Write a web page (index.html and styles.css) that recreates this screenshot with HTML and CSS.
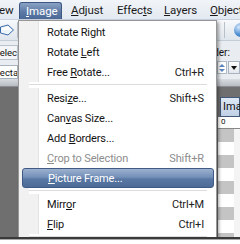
FILE: index.html
```html
<!DOCTYPE html>
<html>
<head>
<meta charset="utf-8">
<link rel="stylesheet" href="styles.css">
</head>
<body>
<div class="shot">
  <div class="menubar">
    <span class="mb mb-view">ew</span>
    <span class="mb mb-image"><u>I</u>mage</span>
    <span class="mb mb-adjust"><u>A</u>djust</span>
    <span class="mb mb-effects">Effec<u>t</u>s</span>
    <span class="mb mb-layers"><u>L</u>ayers</span>
    <span class="mb mb-objects"><u>O</u>bjects</span>
  </div>
  <div class="app">
    <div class="lcol">
      <div class="tbar">
        <svg class="selicon" width="14" height="12" viewBox="0 0 14 12">
          <path d="M0.5 3 L8 1 L13.5 6 L8 11 L0.5 9 Z" fill="#eef4fb" stroke="#3a6aa8" stroke-width="1"/>
          <path d="M2 4.2 L8 2.6 L11.5 6 L2 6 Z" fill="#ffffff"/>
        </svg>
        <span class="tsep"></span>
      </div>
      <div class="opts">
        <div class="lbl">Selection</div>
        <div class="combo">Rectangle</div>
      </div>
      <div class="strip"></div>
      <div class="canvas"></div>
    </div>
    <div class="mid"></div>
    <div class="rcol">
      <div class="tbar rt">
        <span class="tsep"></span>
        <span class="ball"></span>
      </div>
      <div class="opts ropts">
        <div class="rlbl">Order:</div>
        <div class="spin">
          <span class="arrows"><i class="up"></i><i class="dn"></i></span>
          <span class="drop"><i class="tri"></i></span>
        </div>
      </div>
      <div class="strip"></div>
      <div class="tabarea">
        <div class="tab">Image</div>
      </div>
      <div class="ruler">0</div>
      <div class="checks">
        <div class="ck g"></div><div class="ck"></div><div class="ck g"></div><div class="ck"></div>
        <div class="ck g"></div><div class="ck"></div><div class="ck g"></div><div class="ck"></div>
        <div class="ck g"></div>
      </div>
    </div>
  </div>

  <div class="menu">
    <div class="item"><span class="lab">Rotate Right</span><span class="key"></span></div>
    <div class="item"><span class="lab">Rotate <u>L</u>eft</span><span class="key"></span></div>
    <div class="item"><span class="lab">Free <u>R</u>otate...</span><span class="key">Ctrl+R</span></div>
    <div class="sep"></div>
    <div class="item"><span class="lab">Resi<u>z</u>e...</span><span class="key">Shift+S</span></div>
    <div class="item"><span class="lab">Can<u>v</u>as Size...</span><span class="key"></span></div>
    <div class="item"><span class="lab">Add <u>B</u>orders...</span><span class="key"></span></div>
    <div class="item dis"><span class="lab"><u>C</u>rop to Selection</span><span class="key">Shift+R</span></div>
    <div class="item hot"><span class="lab"><u>P</u>icture Frame...</span><span class="key"></span></div>
    <div class="sep"></div>
    <div class="item"><span class="lab">Mirr<u>o</u>r</span><span class="key">Ctrl+M</span></div>
    <div class="item"><span class="lab"><u>F</u>lip</span><span class="key">Ctrl+I</span></div>
    <div class="sep"></div>
    <div class="item"><span class="lab">Rotate 180</span><span class="key"></span></div>
  </div>
</div>
</body>
</html>
```
FILE: styles.css
```css
html, body {
  margin: 0;
  padding: 0;
  background: #ffffff;
}
body {
  width: 240px;
  height: 244px;
  overflow: hidden;
  font-family: Roboto, "Liberation Sans", sans-serif;
  font-size: 11px;
  color: #111;
}
u { text-decoration: underline; text-underline-offset: 1px; }

.shot {
  position: relative;
  height: 237px;
  overflow: hidden;
  border-bottom: 2px solid #3a3a3a;
  box-shadow: 0 1px 0 #a8a8a8;
  background: #6f6f6f;
}

/* menubar */
.menubar {
  height: 20px;
  display: flex;
  align-items: flex-end;
  background: linear-gradient(#f1f4f8, #e3e9f1);
  border-bottom: 1px solid #c9d2de;
  box-sizing: border-box;
  white-space: nowrap;
}
.mb {
  height: 17px;
  line-height: 16px;
  box-sizing: border-box;
  font-size: 11.5px;
  letter-spacing: -0.1px;
  color: #1a1a1a;
  flex: none;
}
.mb-view { width: 19px; text-indent: -1px; }
.mb-image {
  width: 43px;
  padding-left: 6px;
  color: #fff;
  background: linear-gradient(#8aa2c4, #5d7aa6 55%, #4c6a97);
  border: 1px solid #3c5784;
  border-bottom: none;
  border-radius: 3px 3px 0 0;
}
.mb-adjust { width: 55px; padding-left: 9px; }
.mb-effects { width: 47px; }
.mb-layers { width: 46px; }

/* background app */
.app {
  display: flex;
  height: 217px;
}
.lcol { width: 18px; display: flex; flex-direction: column; overflow: hidden; }
.mid { flex: 1; background: #ececec; }
.rcol { width: 23px; display: flex; flex-direction: column; overflow: hidden; background: #6f6f6f; }

.tbar {
  height: 21px;
  flex: none;
  display: flex;
  align-items: center;
  background: linear-gradient(#f7f9fb, #dfe5ec);
  border-bottom: 1px solid #c4ccd6;
  box-sizing: border-box;
}
.selicon { flex: none; }
.tsep { width: 1px; height: 16px; background: #b8c0ca; margin-left: 3px; flex: none; }
.rt { padding-left: 4px; }
.ball {
  width: 14px; height: 14px; border-radius: 50%;
  margin-left: 9px; flex: none;
  background: radial-gradient(circle at 35% 30%, #d6e8fb, #4e8fd3 55%, #1f5aa0);
}

.opts {
  height: 38px;
  flex: none;
  display: flex;
  flex-direction: column;
  gap: 5px;
  padding-top: 4px;
  background: #e9ecf0;
  box-sizing: border-box;
}
.lbl {
  height: 14px;
  line-height: 13px;
  font-size: 9.5px;
  text-indent: -6px;
  white-space: nowrap;
  overflow: hidden;
  background: #f3f5f8;
  border: 1px solid #b9c2cd;
  border-left: none;
}
.combo {
  height: 14px;
  line-height: 13px;
  font-size: 9.5px;
  text-indent: -6px;
  white-space: nowrap;
  overflow: hidden;
  background: #fff;
  border: 1px solid #a9b3bf;
  border-left: none;
}
.ropts { gap: 2px; padding-top: 6px; }
.rlbl { font-size: 10px; line-height: 12px; margin-left: -14px; white-space: nowrap; }
.spin { display: flex; height: 13px; gap: 1px; }
.arrows {
  width: 10px; display: flex; flex-direction: column; align-items: center; justify-content: center; gap: 2px;
  background: #fff; border: 1px solid #b0bac6; box-sizing: border-box;
}
.up { width: 0; height: 0; border-left: 3px solid transparent; border-right: 3px solid transparent; border-bottom: 3px solid #5c86bf; }
.dn { width: 0; height: 0; border-left: 3px solid transparent; border-right: 3px solid transparent; border-top: 3px solid #5c86bf; }
.drop {
  flex: 1; display: flex; align-items: center; justify-content: center;
  background: linear-gradient(#fdfdfd, #e3e7ec); border: 1px solid #a9b3bf; box-sizing: border-box;
}
.tri { width: 0; height: 0; border-left: 3px solid transparent; border-right: 3px solid transparent; border-top: 4px solid #111; }

.strip {
  height: 7px; flex: none;
  background: linear-gradient(#d9dde2, #b8bcc2);
  border-bottom: 1px solid #8a8e94;
}
.canvas { flex: 1; background: #6f6f6f; }

.tabarea { height: 30px; flex: none; padding-top: 10px; box-sizing: border-box; padding-left: 3px; background: #6f6f6f; }
.tab {
  height: 20px; line-height: 18px; font-size: 11px; padding-left: 2px;
  background: linear-gradient(#dfe9f5, #bfd0e6);
  border: 1px solid #44597a; box-sizing: border-box; white-space: nowrap;
}
.ruler {
  height: 12px; flex: none; margin-left: 1px; font-size: 8px; line-height: 10px; padding-left: 3px;
  background: #fff; border-bottom: 1px solid #888; box-sizing: border-box;
}
.checks { flex: 1; margin-left: 1px; background: #f4f4f4; display: flex; flex-direction: column; }
.ck { height: 13px; width: 16px; flex: none; background: #fff; }
.ck.g { background: #c4c4c4; }

/* dropdown menu */
.menu {
  position: absolute;
  left: 18px;
  top: 20px;
  width: 199px;
  box-sizing: border-box;
  padding: 1px 1px 4px 1px;
  border: 1px solid #979797;
  background: linear-gradient(90deg, #f1f1f1 0, #f1f1f1 19px, #e2e3e3 19px, #e2e3e3 20px, #ffffff 20px);
  box-shadow: 2px 2px 3px rgba(0,0,0,0.35);
  display: flex;
  flex-direction: column;
}
.item {
  height: 20px;
  display: flex;
  align-items: center;
  justify-content: space-between;
  padding: 0 11px 0 27px;
  box-sizing: border-box;
  white-space: nowrap;
  font-size: 11px;
  letter-spacing: -0.15px;
  color: #141414;
}
.key { color: #222; }
.item.dis, .item.dis .key { color: #8d8d8d; }
.item.hot {
  margin: 0 1px 0 2px;
  padding-left: 25px;
  color: #fff;
  border: 1px solid #3e5a85;
  border-radius: 3px;
  background: linear-gradient(#9db1cf, #7390b8 45%, #5a78a4 55%, #4e6b97);
}
.sep {
  height: 6px;
  margin: 0 8px 0 9px;
  background: linear-gradient(#fff 2px, #dcdcdc 2px, #dcdcdc 3px, #fff 3px);
}
```
